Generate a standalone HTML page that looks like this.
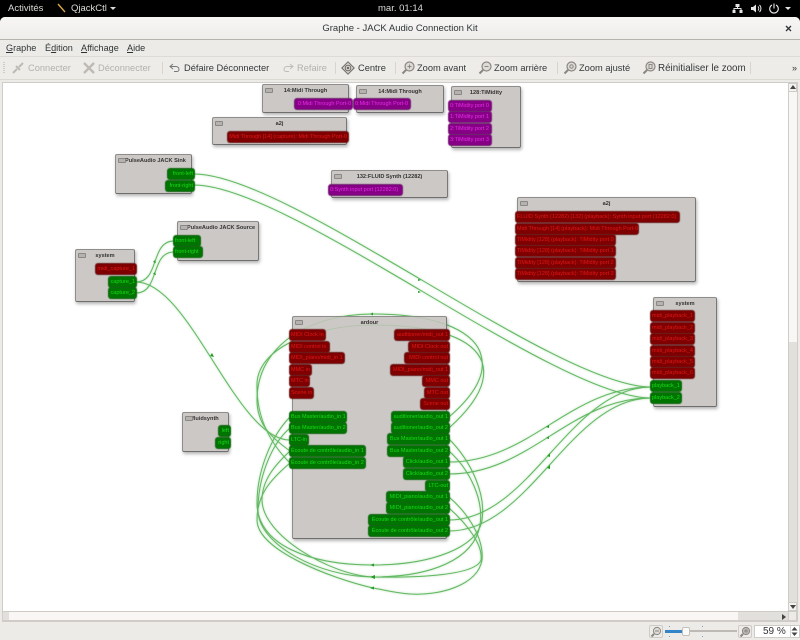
<!DOCTYPE html>
<html><head><meta charset="utf-8"><title>Graphe - JACK Audio Connection Kit</title>
<style>
html,body{margin:0;padding:0;width:800px;height:640px;overflow:hidden;background:#000}
body{font-family:"Liberation Sans","DejaVu Sans",sans-serif;position:relative}
.a{position:absolute;white-space:nowrap}
#top{left:0;top:0;width:800px;height:17px;background:#000;color:#dcdcd8;font-size:9.5px;line-height:17px}
#win{left:0;top:17px;width:800px;height:623px;background:#edebe7;border-radius:5px 5px 0 0;overflow:hidden}
#tb{left:0;top:0;width:800px;height:22px;background:linear-gradient(#f7f6f5,#efedea);border-bottom:1px solid #b6b2ac;text-align:center;font-size:9.5px;line-height:24px;color:#2e3436}
#menu{left:0;top:23px;width:800px;height:16px;background:#edebe7;border-bottom:1px solid #dedbd6;font-size:9.1px;line-height:16px;color:#2e3436}
#tool{left:0;top:40px;width:800px;height:22px;background:#eeece8;border-bottom:1px solid #dcd9d3;font-size:9.3px;line-height:23px;color:#33383a}
.dis{color:#b3b1ad}
.sep{position:absolute;top:5px;width:1px;height:12px;background:#d8d5cf}
u{text-decoration:underline}
#gb{left:2px;top:82px;width:796px;height:540px;border:1px solid #d0cdc8;box-sizing:border-box}
.n{position:absolute;box-sizing:border-box;background:#ccc8c5;border:1px solid #8f8d8b;border-right-color:#777;border-bottom-color:#6e6e6e;border-radius:2px;box-shadow:1px 2px 3px rgba(0,0,0,.3);font-size:5.6px;font-weight:bold;color:#333;text-align:center;line-height:12px;white-space:nowrap}
.n i{position:absolute;left:2px;top:3px;width:6px;height:3px;background:#b5b2b0;border:1px solid #8a8886;border-radius:1px}
.p{position:absolute;box-sizing:border-box;height:10px;border-radius:2px;font-size:5.5px;line-height:10px;padding:0 1px;white-space:nowrap;overflow:hidden}
.e{text-align:right}
.r{background:#7f0000;color:#e21616;box-shadow:0 0 1px 1px #6a1818}
.g{background:#007400;color:#18dc18;box-shadow:0 0 1px 1px #0f660f}
.m{background:#860086;color:#e62ce6;box-shadow:0 0 1px 1px #702070}
.w path{fill:none;stroke:#62b862;stroke-width:1}
</style></head><body>
<div class="a" id="top">
<span class="a" style="left:8px;top:0">Activités</span>
<svg class="a" style="left:57px;top:3px" width="10" height="10"><path d="M1 1L8 9" stroke="#d9a441" stroke-width="1.4"/></svg>
<span class="a" style="left:71px;top:0">QjackCtl</span>
<svg class="a" style="left:110px;top:7px" width="7" height="4"><path d="M0 0H6L3 3Z" fill="#dcdcd8"/></svg>
<span class="a" style="left:378px;top:0">mar. 01:14</span>
<svg class="a" style="left:732px;top:3px" width="64" height="11" fill="none" stroke="#e6e6e6">
<path d="M3.5 1h4v3h-4zM0.5 7h3v3h-3zM7.5 7h3v3h-3z" fill="#e6e6e6" stroke="none"/><path d="M5.5 4v1.5M2 7V5.5h7V7" stroke-width="1"/>
<path d="M19 4h2l3-2.5v8L21 7h-2z" fill="#e6e6e6" stroke="none"/><path d="M26 3.5a3 3 0 0 1 0 4M27.5 2a5 5 0 0 1 0 7"/>
<path d="M40 2a4.3 4.3 0 1 0 4 0M42 0.5v5" stroke-width="1.1"/>
<path d="M53 4h6l-3 3z" fill="#e6e6e6" stroke="none"/></svg>
</div>
<div class="a" id="win">
<div class="a" id="tb">Graphe - JACK Audio Connection Kit
<svg class="a" style="left:785px;top:8px" width="7" height="7"><path d="M1 1L6 6M6 1L1 6" stroke="#2e3436" stroke-width="1.3"/></svg></div>
<div class="a" id="menu">
<span class="a" style="left:6px"><u>G</u>raphe</span>
<span class="a" style="left:45px">É<u>d</u>ition</span>
<span class="a" style="left:81px"><u>A</u>ffichage</span>
<span class="a" style="left:127px"><u>A</u>ide</span>
</div>
<div class="a" id="tool">
<svg class="a" style="left:3px;top:4px" width="3" height="14"><path d="M1 1v12" stroke="#cfccc6" stroke-width="2" stroke-dasharray="1 1"/></svg>
<svg class="a" style="left:11px;top:4px" width="14" height="14" fill="none" stroke="#bdbab5" stroke-width="2"><path d="M2 12L6 8M12 2L8 6M5 5l4 4"/></svg>
<span class="a dis" style="left:28px">Connecter</span>
<svg class="a" style="left:82px;top:4px" width="14" height="14" fill="none" stroke="#bdbab5" stroke-width="2.4"><path d="M2 2L12 12M12 2L2 12"/></svg>
<span class="a dis" style="left:98px">Déconnecter</span>
<div class="sep" style="left:162px"></div>
<svg class="a" style="left:169px;top:6px" width="12" height="10" fill="none" stroke="#777" stroke-width="1"><path d="M4 1L1 3.5 4 6M1 3.5h6a3 3 0 0 1 3 3 2 2 0 0 1-2 2H5"/></svg>
<span class="a" style="left:184px">Défaire Déconnecter</span>
<svg class="a" style="left:282px;top:6px" width="12" height="10" fill="none" stroke="#c0bdb8" stroke-width="1"><path d="M8 1l3 2.5L8 6M11 3.5H5a3 3 0 0 0-3 3 2 2 0 0 0 2 2h3"/></svg>
<span class="a dis" style="left:297px">Refaire</span>
<div class="sep" style="left:335px"></div>
<svg class="a" style="left:341px;top:4px" width="14" height="14" fill="none" stroke="#6d6a66"><path d="M7 .8L13.2 7 7 13.2.8 7z" fill="#d6d3ce"/><circle cx="7" cy="7" r="2.8" fill="#efede9"/><circle cx="7" cy="7" r=".9" fill="#666"/></svg>
<span class="a" style="left:358px">Centre</span>
<div class="sep" style="left:395px"></div>
<svg class="a" style="left:401px;top:4px" width="14" height="14" fill="none" stroke="#8b8883"><circle cx="8.5" cy="5.5" r="4.5" fill="#dedbd6" stroke-width="1.2"/><path d="M5 9L1.5 12.5" stroke-width="2"/><path d="M6.5 5.5h4M8.5 3.5v4"/></svg>
<span class="a" style="left:417px">Zoom avant</span>
<svg class="a" style="left:478px;top:4px" width="14" height="14" fill="none" stroke="#8b8883"><circle cx="8.5" cy="5.5" r="4.5" fill="#dedbd6" stroke-width="1.2"/><path d="M5 9L1.5 12.5" stroke-width="2"/><path d="M6.5 5.5h4"/></svg>
<span class="a" style="left:494px">Zoom arrière</span>
<div class="sep" style="left:557px"></div>
<svg class="a" style="left:563px;top:4px" width="14" height="14" fill="none" stroke="#8b8883"><circle cx="8.5" cy="5.5" r="4.5" fill="#dedbd6" stroke-width="1.2"/><path d="M5 9L1.5 12.5" stroke-width="2"/><circle cx="8.5" cy="5.5" r="1.7"/></svg>
<span class="a" style="left:579px">Zoom ajusté</span>
<svg class="a" style="left:642px;top:4px" width="14" height="14" fill="none" stroke="#8b8883"><circle cx="8.5" cy="5.5" r="4.5" fill="#dedbd6" stroke-width="1.2"/><path d="M5 9L1.5 12.5" stroke-width="2"/><path d="M7 3.5h3v4H7z"/></svg>
<span class="a" style="left:658px;font-size:9.8px">Réinitialiser le zoom</span>
<div class="sep" style="left:750px"></div>
<span class="a" style="left:792px;font-size:9px;top:0">»</span>
</div>
</div>

<div class="a" id="gb"></div>
<div class="a" style="left:3px;top:83px;width:785px;height:528px;background:#fff"></div>

<svg class="a w" style="left:0;top:0" width="800" height="640">
<defs><filter id="b" x="-5%" y="-5%" width="110%" height="110%"><feGaussianBlur stdDeviation="1"/></filter></defs>
<g id="wires">
<path d="M194 174C290 174 555 387 651 387"/>
<path d="M194 185C290 185 555 398 651 398"/>
<path d="M136 282C160 282 150 241 174 241"/>
<path d="M136 293C160 293 150 252 174 252"/>
<path d="M136 282C190 282 236 440 290 440"/>
<path d="M449 462C530 462 570 387 651 387"/>
<path d="M449 474C530 474 570 398 651 398"/>
<path d="M449 520C530 520 570 387 651 387"/>
<path d="M449 531C530 531 570 398 651 398"/>
<path d="M449 417C478 392 486 372 481 355C476 335 445 314 373 314C310 314 257 345 257 400C257 425 272 438 290 451"/>
<path d="M449 428C478 402 488 380 482 362C474 340 440 325 373 325C320 325 259 345 257 383C256 420 272 445 290 463"/>
<path d="M449 439C472 462 486 495 482 520C478 548 430 565 373 565C310 565 257 545 257 503C257 470 272 435 290 417"/>
<path d="M449 451C470 470 484 500 480 525C474 560 430 577 373 577C320 577 258 545 258 510C258 480 270 445 290 428"/>
<path d="M449 497C470 515 484 540 482 560C478 585 440 596 410 594C395 593 385 590 373 588C330 578 257 550 257 520C257 495 270 480 290 463"/>
<path d="M449 508C468 525 483 545 481 560C476 575 420 578 373 577C330 575 262 535 262 500C262 480 275 465 290 451"/>
</g>
<use href="#wires" filter="url(#b)" opacity=".55"/>
<path d="M153 262l2-2 1 3zM153 274l2-2 1 3zM210 356l2-3 2 4zM418 279l3 1-3 1zM418 291l3 1-3 1zM370 314l3-1.5v3zM370 325l3-1.5v3zM370 565l4-1.5v3zM370 577l5-2v4zM370 588l4-1.5v3zM546 427l3-2v3zM546 438l3-2v3zM547 456l3-3v4zM547 468l3-3v4z" style="fill:#1f9a1f;stroke:none"/>
</svg>

<div class="n" style="left:262px;top:84px;width:87px;height:29px"><i></i>14:Midi Through</div>
<div class="n" style="left:356px;top:85px;width:88px;height:28px"><i></i>14:Midi Through</div>
<div class="n" style="left:451px;top:86px;width:70px;height:62px"><i></i>128:TiMidity</div>
<div class="n" style="left:212px;top:117px;width:135px;height:28px"><i></i>a2j</div>
<div class="n" style="left:115px;top:154px;width:77px;height:40px;text-align:left;padding-left:9px"><i></i>PulseAudio JACK Sink</div>
<div class="n" style="left:331px;top:170px;width:117px;height:28px"><i></i>132:FLUID Synth (12282)</div>
<div class="n" style="left:517px;top:197px;width:179px;height:85px"><i></i>a2j</div>
<div class="n" style="left:177px;top:221px;width:82px;height:40px;text-align:left;padding-left:9px"><i></i>PulseAudio JACK Source</div>
<div class="n" style="left:75px;top:249px;width:60px;height:53px"><i></i>system</div>
<div class="n" style="left:653px;top:297px;width:64px;height:110px"><i></i>system</div>
<div class="n" style="left:292px;top:316px;width:155px;height:223px"><i></i>ardour</div>
<div class="n" style="left:182px;top:412px;width:47px;height:40px;text-align:left;padding-left:9px"><i></i>fluidsynth</div>

<svg class="a w" style="left:0;top:0;opacity:.22" width="800" height="640"><use href="#wires"/></svg>

<div class="p m e" style="left:295px;top:99px;width:57px">0:Midi Through Port-0</div>
<div class="p m" style="left:354px;top:99px;width:56px">0:Midi Through Port-0</div>
<div class="p m" style="left:449px;top:101px;width:42px">0:TiMidity port 0</div>
<div class="p m" style="left:449px;top:112px;width:42px">1:TiMidity port 1</div>
<div class="p m" style="left:449px;top:124px;width:42px">2:TiMidity port 2</div>
<div class="p m" style="left:449px;top:135px;width:42px">3:TiMidity port 3</div>
<div class="p r e" style="left:228px;top:132px;width:120px">Midi Through [14] (capture): Midi Through Port-0</div>
<div class="p g e" style="left:168px;top:169px;width:26px">front-left</div>
<div class="p g e" style="left:166px;top:181px;width:28px">front-right</div>
<div class="p m" style="left:329px;top:185px;width:73px">0:Synth input port (12282:0)</div>
<div class="p r" style="left:516px;top:212px;width:163px">FLUID Synth (12282) [132] (playback): Synth input port (12282:0)</div>
<div class="p r" style="left:516px;top:224px;width:122px">Midi Through [14] (playback): Midi Through Port-0</div>
<div class="p r" style="left:516px;top:235px;width:99px">TiMidity [128] (playback): TiMidity port 0</div>
<div class="p r" style="left:516px;top:246px;width:99px">TiMidity [128] (playback): TiMidity port 1</div>
<div class="p r" style="left:516px;top:258px;width:99px">TiMidity [128] (playback): TiMidity port 2</div>
<div class="p r" style="left:516px;top:269px;width:99px">TiMidity [128] (playback): TiMidity port 3</div>
<div class="p g" style="left:174px;top:236px;width:26px">front-left</div>
<div class="p g" style="left:174px;top:247px;width:28px">front-right</div>
<div class="p r e" style="left:96px;top:264px;width:40px">midi_capture_1</div>
<div class="p g e" style="left:109px;top:277px;width:27px">capture_1</div>
<div class="p g e" style="left:109px;top:288px;width:27px">capture_2</div>
<div class="p r" style="left:651px;top:311px;width:43px">midi_playback_1</div>
<div class="p r" style="left:651px;top:323px;width:43px">midi_playback_2</div>
<div class="p r" style="left:651px;top:334px;width:43px">midi_playback_3</div>
<div class="p r" style="left:651px;top:346px;width:43px">midi_playback_4</div>
<div class="p r" style="left:651px;top:357px;width:43px">midi_playback_5</div>
<div class="p r" style="left:651px;top:368px;width:43px">midi_playback_6</div>
<div class="p g" style="left:651px;top:381px;width:30px">playback_1</div>
<div class="p g" style="left:651px;top:393px;width:30px">playback_2</div>

<div class="p r" style="left:290px;top:330px;width:35px">MIDI Clock in</div>
<div class="p r" style="left:290px;top:342px;width:39px">MIDI control in</div>
<div class="p r" style="left:290px;top:353px;width:54px">MIDI_piano/midi_in 1</div>
<div class="p r" style="left:290px;top:365px;width:21px">MMC in</div>
<div class="p r" style="left:290px;top:376px;width:19px">MTC in</div>
<div class="p r" style="left:290px;top:388px;width:23px">Scene in</div>
<div class="p g" style="left:290px;top:412px;width:56px">Bus Master/audio_in 1</div>
<div class="p g" style="left:290px;top:423px;width:56px">Bus Master/audio_in 2</div>
<div class="p g" style="left:290px;top:435px;width:18px">LTC-in</div>
<div class="p g" style="left:290px;top:446px;width:75px">Écoute de contrôle/audio_in 1</div>
<div class="p g" style="left:290px;top:458px;width:75px">Écoute de contrôle/audio_in 2</div>

<div class="p r e" style="left:395px;top:330px;width:54px">auditioner/midi_out 1</div>
<div class="p r e" style="left:409px;top:342px;width:40px">MIDI Clock out</div>
<div class="p r e" style="left:405px;top:353px;width:44px">MIDI control out</div>
<div class="p r e" style="left:391px;top:365px;width:58px">MIDI_piano/midi_out 1</div>
<div class="p r e" style="left:423px;top:376px;width:26px">MMC out</div>
<div class="p r e" style="left:425px;top:388px;width:24px">MTC out</div>
<div class="p r e" style="left:421px;top:399px;width:28px">Scene out</div>
<div class="p g e" style="left:392px;top:412px;width:57px">auditioner/audio_out 1</div>
<div class="p g e" style="left:392px;top:423px;width:57px">auditioner/audio_out 2</div>
<div class="p g e" style="left:388px;top:434px;width:61px">Bus Master/audio_out 1</div>
<div class="p g e" style="left:388px;top:446px;width:61px">Bus Master/audio_out 2</div>
<div class="p g e" style="left:404px;top:457px;width:45px">Click/audio_out 1</div>
<div class="p g e" style="left:404px;top:469px;width:45px">Click/audio_out 2</div>
<div class="p g e" style="left:426px;top:481px;width:23px">LTC-out</div>
<div class="p g e" style="left:387px;top:492px;width:62px">MIDI_piano/audio_out 1</div>
<div class="p g e" style="left:387px;top:503px;width:62px">MIDI_piano/audio_out 2</div>
<div class="p g e" style="left:369px;top:515px;width:80px">Écoute de contrôle/audio_out 1</div>
<div class="p g e" style="left:369px;top:526px;width:80px">Écoute de contrôle/audio_out 2</div>
<div class="p g e" style="left:219px;top:426px;width:11px">left</div>
<div class="p g e" style="left:216px;top:438px;width:14px">right</div>

<!-- scrollbars -->
<div class="a" style="left:788px;top:83px;width:9px;height:528px;background:#e2e0dc;border-left:1px solid #cfccc7;box-sizing:border-box"></div>
<div class="a" style="left:788px;top:92px;width:9px;height:250px;background:#f8f7f6;border-left:1px solid #cfccc7;box-sizing:border-box"></div>
<div class="a" style="left:788px;top:83px;width:9px;height:9px;background:#f3f2f0;border:1px solid #cfccc7;box-sizing:border-box"></div>
<svg class="a" style="left:790px;top:85px" width="6" height="5"><path d="M3 0L6 4H0z" fill="#444"/></svg>
<div class="a" style="left:788px;top:602px;width:9px;height:9px;background:#f3f2f0;border:1px solid #cfccc7;box-sizing:border-box"></div>
<svg class="a" style="left:790px;top:605px" width="6" height="5"><path d="M3 4L6 0H0z" fill="#444"/></svg>
<div class="a" style="left:3px;top:611px;width:785px;height:10px;background:#e2e0dc;border-top:1px solid #cfccc7;border-bottom:1px solid #cfccc7;box-sizing:border-box"></div>
<div class="a" style="left:9px;top:611px;width:729px;height:10px;background:#f8f7f6;border-top:1px solid #cfccc7;border-bottom:1px solid #cfccc7;box-sizing:border-box"></div>
<svg class="a" style="left:782px;top:614px" width="5" height="6"><path d="M0 0L4 3 0 6z" fill="#444"/></svg>
<div class="a" style="left:788px;top:611px;width:9px;height:10px;background:#edebe7;border:1px solid #cfccc7;box-sizing:border-box"></div>

<!-- status bar -->
<div class="a" style="left:649px;top:625px;width:14px;height:13px;background:#eeece8;border:1px solid #cfccc7;border-radius:2px;box-sizing:border-box"></div>
<svg class="a" style="left:650px;top:626px" width="12" height="12" fill="none" stroke="#8b8883"><circle cx="7" cy="5" r="3.6" fill="#dedbd6"/><path d="M4 8L1.5 10.5" stroke-width="2"/><path d="M5 5h4"/></svg>
<div class="a" style="left:665px;top:630px;width:72px;height:2px;background:#bdbab5"></div>
<div class="a" style="left:665px;top:630px;width:18px;height:3px;background:#3584c8"></div>
<div class="a" style="left:682px;top:627px;width:8px;height:9px;background:#fafafa;border:1px solid #c4c1bc;border-radius:2px;box-sizing:border-box"></div>
<div class="a" style="left:669px;top:626px;width:1px;height:1px;background:#7aa3c4"></div>
<div class="a" style="left:669px;top:636px;width:1px;height:1px;background:#7aa3c4"></div>
<div class="a" style="left:702px;top:626px;width:1px;height:1px;background:#7aa3c4"></div>
<div class="a" style="left:702px;top:636px;width:1px;height:1px;background:#7aa3c4"></div>
<div class="a" style="left:738px;top:625px;width:14px;height:13px;background:#eeece8;border:1px solid #cfccc7;border-radius:2px;box-sizing:border-box"></div>
<svg class="a" style="left:739px;top:626px" width="12" height="12" fill="none" stroke="#8b8883"><circle cx="7" cy="5" r="3.6" fill="#bdbab6"/><path d="M4 8L1.5 10.5" stroke-width="2"/><path d="M5 5h4M7 3v4"/></svg>
<div class="a" style="left:754px;top:625px;width:46px;height:13px;background:#fff;border:1px solid #cfccc7;box-sizing:border-box;font-size:10px;line-height:12px;color:#333;padding-left:8px">59 %</div>
<div class="a" style="left:790px;top:626px;width:1px;height:11px;background:#dbd8d3"></div>
<svg class="a" style="left:791px;top:627px" width="7" height="10"><path d="M3.5 0L6.5 3.5H.5zM3.5 9L6.5 5.5H.5z" fill="#444"/></svg>
</body></html>
